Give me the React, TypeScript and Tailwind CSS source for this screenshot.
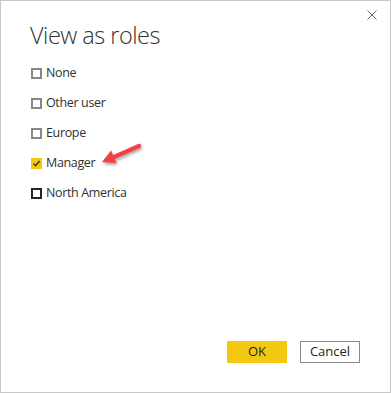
const roles = [
  { label: "None", checked: false, dark: false },
  { label: "Other user", checked: false, dark: false },
  { label: "Europe", checked: false, dark: false },
  { label: "Manager", checked: true, dark: false },
  { label: "North America", checked: false, dark: true },
];

function Box({ checked, dark }: { checked: boolean; dark: boolean }) {
  if (checked) {
    return (
      <span className="flex h-[11px] w-[11px] items-center justify-center bg-[#f2c811]">
        <svg width="9" height="9" viewBox="0 0 9 9">
          <path d="M1.5 4.6 L3.6 6.6 L7.6 2" fill="none" stroke="#252423" strokeWidth="1.3" />
        </svg>
      </span>
    );
  }
  return (
    <span
      className={`block h-[11px] w-[11px] border-2 ${dark ? "border-[#252423]" : "border-[#8a8886]"}`}
    />
  );
}

export default function App() {
  return (
    <div className="relative h-[393px] w-[391px] border border-[#c8c8c8] bg-white font-['Segoe_UI','Open_Sans',sans-serif] text-[#252423]">
      <button className="absolute right-[12px] top-[8px] p-[1px]">
        <svg width="10" height="10" viewBox="0 0 10 10">
          <path d="M0.5 0.5 L9.5 9.5 M9.5 0.5 L0.5 9.5" stroke="#6b6b6b" strokeWidth="1" />
        </svg>
      </button>

      <h1 className="pl-[29px] pt-[18px] text-[23.5px] font-light leading-[32px] tracking-[-0.5px] text-[#333]">
        View as roles
      </h1>

      <div className="mt-[13px] flex flex-col gap-[12px] pl-[30px]">
        {roles.map((r) => (
          <label key={r.label} className="flex h-[18px] items-center gap-[4px] text-[12.5px] text-[#323130]">
            <Box checked={r.checked} dark={r.dark} />
            <span className="tracking-[-0.35px]">{r.label}</span>
          </label>
        ))}
      </div>

      <svg className="absolute left-[95px] top-[138px]" width="52" height="34" viewBox="0 0 52 34">
        <defs>
          <filter id="sh" x="-30%" y="-30%" width="160%" height="160%">
            <feDropShadow dx="1" dy="2" stdDeviation="1.6" floodColor="#000" floodOpacity="0.35" />
          </filter>
        </defs>
        <g filter="url(#sh)">
          <path d="M43 7 L17 18.5" stroke="#f2404a" strokeWidth="4.5" strokeLinecap="round" />
          <path d="M6 23 L15.1 11.4 L20.7 24.2 Z" fill="#f2404a" />
        </g>
      </svg>

      <div className="absolute bottom-[29px] right-[30px] flex gap-[13px]">
        <button className="h-[22px] w-[60px] bg-[#f2c811] text-[13px] text-[#252423]">OK</button>
        <button className="h-[22px] w-[60px] border border-[#8a8886] bg-white text-[13px] text-[#252423]">
          Cancel
        </button>
      </div>
    </div>
  );
}
